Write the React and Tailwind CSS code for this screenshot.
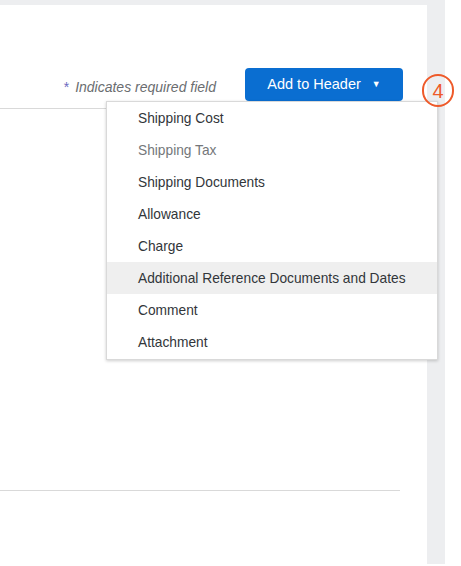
import React from "react";

const items = [
  { label: "Shipping Cost" },
  { label: "Shipping Tax", muted: true },
  { label: "Shipping Documents" },
  { label: "Allowance" },
  { label: "Charge" },
  { label: "Additional Reference Documents and Dates", active: true },
  { label: "Comment" },
  { label: "Attachment" },
];

const font = { fontFamily: '"Liberation Sans", Arial, sans-serif' };

export default function App() {
  return (
    <div
      className="relative w-[461px] h-[566px] flex bg-white overflow-hidden"
      style={font}
    >
      <div className="w-[445px] h-[564px] bg-[#edeef0] pt-[5px] flex">
        <div className="w-[427px] h-full bg-white flex flex-col">
          <div className="mt-[63px] h-[41px] border-b border-[#d9d9d9] flex items-start justify-end pr-[24px]">
            <span className="mt-[9px] text-[14px] italic text-[#6a6d70] mr-[29px]">
              <span className="text-[#6c6ac0] not-italic mr-[6px]">*</span>
              Indicates required field
            </span>
            <button className="h-[33px] w-[158px] rounded-[4px] bg-[#0a6ed1] text-white text-[14.5px] flex items-center justify-center gap-[11px]">
              <span>Add to Header</span>
              <span className="text-[9px]">▼</span>
            </button>
          </div>
          <div className="h-[382px] border-b border-[#d9d9d9] w-[400px]" />
        </div>
      </div>

      {/* dropdown menu */}
      <div className="absolute left-[106px] top-[101px] w-[332px] bg-white border border-[#d9d9d9] shadow-[0_1px_3px_rgba(0,0,0,0.2)] pb-[1px]">
        {items.map((it) => (
          <div
            key={it.label}
            className={`h-[32px] flex items-center pl-[31px] pt-[2px] text-[13.75px] ${
              it.active ? "bg-[#efefef]" : ""
            } ${it.muted ? "text-[#74777a]" : "text-[#32363a]"}`}
          >
            {it.label}
          </div>
        ))}
      </div>

      {/* step marker */}
      <div className="absolute left-[422px] top-[74px] w-[32px] h-[33px] rounded-full border-[2.5px] border-[#ee5a2a] flex items-center justify-center text-[#ee5a2a] text-[20px]">
        4
      </div>
    </div>
  );
}
